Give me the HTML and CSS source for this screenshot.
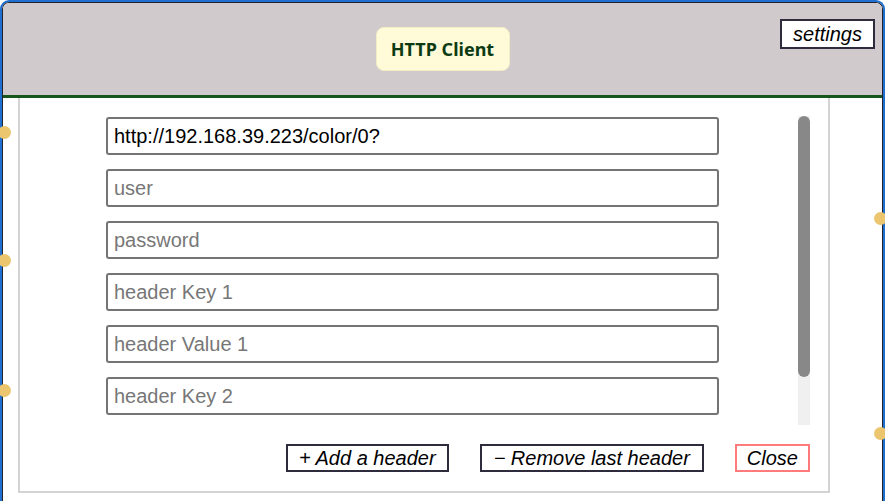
FILE: index.html
```html
<!DOCTYPE html>
<html>
<head>
<meta charset="utf-8">
<title>HTTP Client</title>
<link rel="stylesheet" href="styles.css">
</head>
<body>
<div class="frame">
  <div class="window">
    <header class="header">
      <div class="title">HTTP Client</div>
      <button class="btn settings">settings</button>
    </header>
    <main class="panel">
      <div class="scroll">
        <div class="fields">
          <input class="field" type="text" value="http://192.168.39.223/color/0?">
          <input class="field" type="text" placeholder="user">
          <input class="field" type="password" placeholder="password">
          <input class="field" type="text" placeholder="header Key 1">
          <input class="field" type="text" placeholder="header Value 1">
          <input class="field" type="text" placeholder="header Key 2">
          <input class="field" type="text" placeholder="header Value 2">
        </div>
        <div class="scrollbar"><div class="thumb"></div></div>
      </div>
      <div class="actions">
        <button class="btn add">+ Add a header</button>
        <button class="btn remove">− Remove last header</button>
        <button class="btn close">Close</button>
      </div>
    </main>
  </div>
  <span class="dot dot-l1"></span>
  <span class="dot dot-l2"></span>
  <span class="dot dot-l3"></span>
  <span class="dot dot-r1"></span>
  <span class="dot dot-r2"></span>
</div>
</body>
</html>
```
FILE: styles.css
```css
html, body {
  margin: 0;
  padding: 0;
  background: #ffffff;
  overflow: hidden;
}

.frame {
  position: relative;
  width: 885px;
  height: 520px;
  box-sizing: border-box;
  border: 2px solid #1f6fd1;
  border-bottom: none;
  border-radius: 9px 9px 0 0;
}

.window {
  height: 100%;
  box-sizing: border-box;
  border: 1px solid #23232e;
  border-bottom: none;
  border-radius: 7px 7px 0 0;
  overflow: hidden;
  background: #ffffff;
}

.header {
  position: relative;
  height: 92px;
  background: #d0cacd;
  border-bottom: 3px solid #17561c;
  display: flex;
  align-items: center;
  justify-content: center;
}

.title {
  width: 134px;
  height: 44px;
  box-sizing: border-box;
  display: flex;
  align-items: center;
  justify-content: center;
  background: #fffbd9;
  border: 1px solid #f3edc6;
  border-radius: 8px;
  font-family: "Noto Sans", "Open Sans", sans-serif;
  font-weight: 700;
  font-size: 18px;
  color: #0c3a12;
}

.btn {
  height: 28px;
  box-sizing: border-box;
  padding: 0 10px;
  margin: 0;
  background: #ffffff;
  border: 2px solid #2e2c3c;
  border-radius: 0;
  font-family: "Liberation Sans", Arial, sans-serif;
  font-style: italic;
  font-size: 20px;
  line-height: 24px;
  color: #000000;
}

.settings {
  position: absolute;
  top: 16px;
  right: 7px;
  height: 30px;
  padding: 0 11px;
}

.panel {
  margin: 0 52px 0 15px;
  border: 2px solid #d3d3d3;
  border-top: none;
  padding: 18px 19px 19px 86px;
}

.scroll {
  height: 309px;
  width: 704px;
  display: flex;
  justify-content: space-between;
  overflow: hidden;
}

.fields {
  padding-top: 1px;
}

.scrollbar {
  width: 12px;
  height: 309px;
  background: #f0f0f0;
}

.thumb {
  height: 261px;
  background: #888888;
  border-radius: 6px;
}

.field {
  display: block;
  width: 613px;
  height: 38px;
  box-sizing: border-box;
  margin: 0 0 14px 0;
  padding: 0 6px;
  border: 2px solid #747474;
  border-radius: 3px;
  font-family: "Liberation Sans", Arial, sans-serif;
  font-size: 20px;
  color: #000000;
  background: #ffffff;
  outline: none;
}

.field::placeholder {
  color: #777777;
}

.actions {
  margin-top: 19px;
  width: 704px;
  display: flex;
  justify-content: flex-end;
  gap: 31px;
}

.add {
  padding: 0 11px;
}

.remove {
  padding: 0 12px;
}

.close {
  border-color: #ff7a7a;
}

.dot {
  position: absolute;
  width: 13px;
  height: 13px;
  border-radius: 50%;
  background: #ebc66f;
}

.dot-l1 { left: -4px; top: 124px; }
.dot-l2 { left: -4px; top: 252px; }
.dot-l3 { left: -4px; top: 382px; }
.dot-r1 { right: -4px; top: 210px; }
.dot-r2 { right: -4px; top: 425px; }
```
